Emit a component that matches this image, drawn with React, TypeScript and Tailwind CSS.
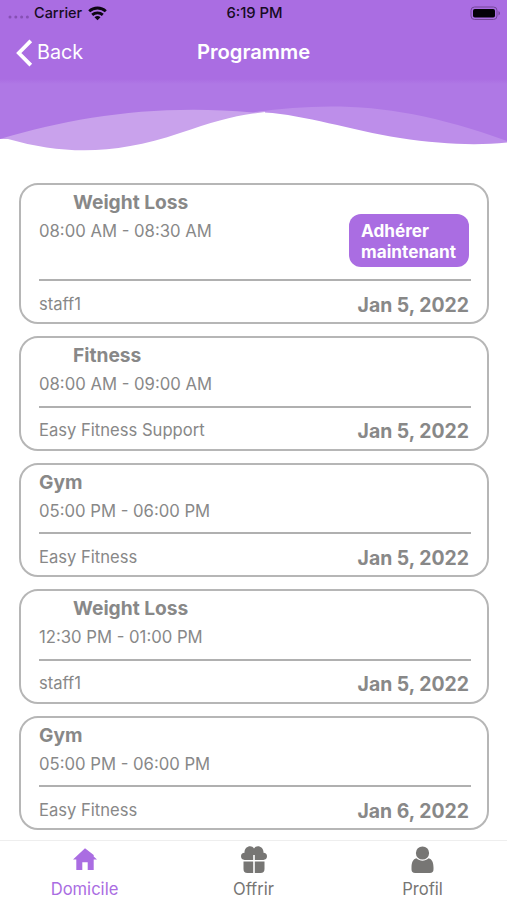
type Session = { title: string; indent: boolean; time: string; staff: string; date: string; join?: boolean };

const sessions: Session[] = [
  { title: "Weight Loss", indent: true, time: "08:00 AM - 08:30 AM", staff: "staff1", date: "Jan 5, 2022", join: true },
  { title: "Fitness", indent: true, time: "08:00 AM - 09:00 AM", staff: "Easy Fitness Support", date: "Jan 5, 2022" },
  { title: "Gym", indent: false, time: "05:00 PM - 06:00 PM", staff: "Easy Fitness", date: "Jan 5, 2022" },
  { title: "Weight Loss", indent: true, time: "12:30 PM - 01:00 PM", staff: "staff1", date: "Jan 5, 2022" },
  { title: "Gym", indent: false, time: "05:00 PM - 06:00 PM", staff: "Easy Fitness", date: "Jan 6, 2022" },
];

function StatusBar() {
  return (
    <div className="grid h-[26px] grid-cols-3 items-center pl-2 pr-[6px] text-[14px] font-medium text-[#160b22]">
      <div className="flex items-center">
        <svg className="mt-[7px] w-[22px]" height="4" viewBox="0 0 22 4" fill="#8650b4">
          <circle cx="2" cy="2" r="1.5" /><circle cx="7.8" cy="2" r="1.5" /><circle cx="13.6" cy="2" r="1.5" /><circle cx="19.4" cy="2" r="1.5" />
        </svg>
        <span className="ml-1 w-[49px] whitespace-nowrap text-[14.5px]">Carrier</span>
        <svg className="ml-[5px]" width="19" height="15" viewBox="0 0 19 15" fill="none" stroke="#0c0612" strokeWidth="2.8">
          <path d="M1.2 5.3C5.8.9 13.2.9 17.8 5.3M4.2 8.9c3-2.7 7.6-2.7 10.6 0" />
          <path d="M9.5 14.2 6.5 11.3c1.7-1.6 4.3-1.6 6 0Z" fill="#0c0612" stroke="none" />
        </svg>
      </div>
      <span className="text-center text-[14.8px] whitespace-nowrap">6:19 PM</span>
      <svg className="justify-self-end" width="31" height="15" viewBox="0 0 31 15">
        <rect x="1" y="1" width="26" height="12.5" rx="3.5" fill="none" stroke="#744799" />
        <rect x="3" y="3" width="22" height="8.5" rx="1.8" fill="#050208" />
        <path d="M28.5 5c2 1 2 3.6 0 4.6Z" fill="#744799" />
      </svg>
    </div>
  );
}

function Header() {
  return (
    <header className="h-[79px] bg-[#aa6de2]">
      <StatusBar />
      <div className="grid h-[53px] grid-cols-3 items-center px-4 text-[20px] text-white">
        <button className="flex items-center">
          <svg width="17" height="28" viewBox="0 0 17 28" fill="none" stroke="white" strokeWidth="3.8"><path d="M14.8 1.8 2.8 14l12 12.2" /></svg>
          <span className="ml-1 pt-px text-[19.8px]">Back</span>
        </button>
        <h1 className="text-center text-[20.2px] font-semibold">Programme</h1>
      </div>
    </header>
  );
}

function Waves() {
  return (
    <svg className="block h-[104px] w-full" viewBox="0 79 507 104">
      <defs>
        <linearGradient id="shade" x1="0" y1="0" x2="0" y2="1"><stop stopColor="#aa6de2" /><stop offset=".08" stopColor="#af78e5" /></linearGradient>
      </defs>
      <path d="M0 139 8 139C65 155 115 155 180 133C210 123 232 116 253 113.5L265 112V105H0Z" fill="#c9a2ec" />
      <path d="M265 100H507V142.5C475 146 440 144 400 138C350 130 305 115 265 112.5Z" fill="#bd8eea" />
      <path d="M0 139C75 117 155 104 253 112.5C335 101 405 104 507 141V79H0Z" fill="url(#shade)" />
    </svg>
  );
}

function Card({ s }: { s: Session }) {
  return (
    <article className={`flex w-[470px] flex-col rounded-[19px] border-2 border-[#b6b6b6] pl-[18px] pr-[16px] text-[#888] ${s.join ? "h-[141px]" : "h-[114.6px]"}`}>
      <div className={`flex justify-between border-b-2 border-[#b0b0b0] ${s.join ? "h-[96px]" : "h-[69.5px]"}`}>
        <div className="pt-[4px]">
          <h2 className={`text-[19.2px] leading-[27px] font-bold ${s.indent ? "pl-[34px]" : ""}`}>{s.title}</h2>
          <p className="mt-[2px] text-[16.7px] leading-[26px]">{s.time}</p>
        </div>
        {s.join && <button className="mt-[29px] mr-[2px] h-[53px] w-[120px] rounded-[12px] bg-[#aa6de2] pl-[12px] text-left text-[17.2px] leading-[21px] font-bold text-white">Adhérer<br />maintenant</button>}
      </div>
      <div className="flex items-start justify-between pr-[2px]">
        <span className="pt-[9.5px] text-[16.6px] leading-[26px]">{s.staff}</span>
        <span className="pt-[10.6px] text-[19.4px] leading-[27px] font-bold">{s.date}</span>
      </div>
    </article>
  );
}

function TabBar() {
  return (
    <nav className="grid h-[60px] grid-cols-3 border-t border-[#eee] bg-white text-[16.6px] leading-[24px] text-[#777674]">
      <div className="flex flex-col items-center text-[#aa6de2]">
        <svg className="mt-[5px]" width="28" height="28" viewBox="0 0 28 28" fill="currentColor"><path d="M14 2.2 2 13.6h3.3V24h6v-7.8h5.4V24h6V13.6H26L22.7 10.5V9Z" /></svg>
        <span className="mt-[3px]">Domicile</span>
      </div>
      <div className="flex flex-col items-center">
        <svg className="mt-[5px]" width="28" height="28" viewBox="0 0 28 28" fill="currentColor"><path d="M1 10.3c0-2.2 1.3-3.5 3.5-3.6C4.2 0 11.8-1.8 14 2.6 16.2-1.8 23.8 0 23.5 6.7c2.2.1 3.5 1.4 3.5 3.6s-1.4 3.6-3.6 3.6h-8.6V9h-1.6v4.9H4.6C2.4 13.9 1 12.5 1 10.3Z" /><path d="M3.5 15.4h9.7V27H7.5c-2.8 0-4-1.2-4-4Zm11.3 0h9.7V23c0 2.8-1.2 4-4 4h-5.7Z" /></svg>
        <span className="mt-[3px]">Offrir</span>
      </div>
      <div className="flex flex-col items-center">
        <svg className="mt-[5px]" width="28" height="28" viewBox="0 0 28 28" fill="currentColor"><circle cx="13.5" cy="7" r="6.6" /><path d="M7.3 12.3c3.6 3.3 8.8 3.3 12.4 0 3.2.9 4.8 4.2 4.8 9.2v1.7c0 2.5-1.2 3.8-3.7 3.8H6.2c-2.5 0-3.7-1.3-3.7-3.8v-1.7c0-5 1.6-8.3 4.8-9.2Z" /></svg>
        <span className="mt-[3px]">Profil</span>
      </div>
    </nav>
  );
}

export default function App() {
  return (
    <div className="flex h-[900px] w-[507px] flex-col overflow-hidden bg-white font-['Inter',sans-serif]">
      <Header />
      <Waves />
      <main className="flex min-h-0 flex-1 flex-col gap-[12px] pl-[19px]">
        {sessions.map((s, i) => <Card key={i} s={s} />)}
      </main>
      <TabBar />
    </div>
  );
}
